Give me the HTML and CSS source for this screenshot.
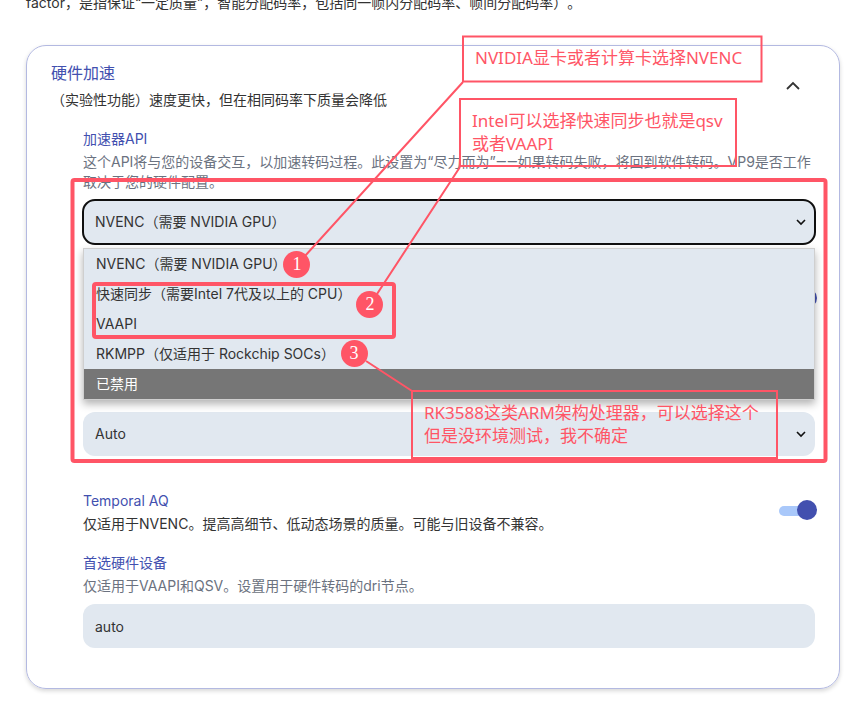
FILE: index.html
```html
<!DOCTYPE html>
<html lang="zh-CN">
<head>
<meta charset="utf-8">
<title>硬件加速</title>
<link rel="stylesheet" href="styles.css">
</head>
<body>
<main class="page">
  <p class="intro">factor，是指保证“一定质量”，智能分配码率，包括同一帧内分配码率、帧间分配码率）。</p>

  <section class="card">
    <header class="card-header">
      <div class="card-heading">
        <h2 class="card-title">硬件加速</h2>
        <p class="card-subtitle">（实验性功能）速度更快，但在相同码率下质量会降低</p>
      </div>
      <button class="collapse" type="button" aria-label="收起">
        <svg width="14" height="10" viewBox="0 0 14 10"><path d="M1 8 L7 2 L13 8" fill="none" stroke="#333" stroke-width="1.800"/></svg>
      </button>
    </header>

    <div class="settings">
      <div class="field">
        <label class="label" for="accel">加速器API</label>
        <p class="hint">这个API将与您的设备交互，以加速转码过程。此设置为“尽力而为”<span class="dash">——</span>如果转码失败，将回到软件转码。VP9是否工作取决于您的硬件配置。</p>
        <div class="control">
          <select class="box focused" id="accel">
            <option>NVENC（需要 NVIDIA GPU）</option>
          </select>
          <svg class="arrow" width="10" height="8" viewBox="0 0 10 8"><path d="M1 2 L5 6 L9 2" fill="none" stroke="#111" stroke-width="1.600"/></svg>
          <ul class="menu" role="listbox" aria-label="加速器API">
            <li role="option">NVENC（需要 NVIDIA GPU）</li>
            <li role="option">快速同步（需要Intel 7代及以上的 CPU）</li>
            <li role="option">VAAPI</li>
            <li role="option">RKMPP（仅适用于 Rockchip SOCs）</li>
            <li role="option" class="active">已禁用</li>
          </ul>
        </div>
      </div>

      <div class="row">
        <div class="row-text"></div>
        <input class="switch" type="checkbox" checked aria-label="开关">
      </div>

      <div class="field covered">
        <div class="control">
          <select class="box" id="mode" aria-label="模式">
            <option>Auto</option>
          </select>
          <svg class="arrow" width="10" height="8" viewBox="0 0 10 8"><path d="M1 2 L5 6 L9 2" fill="none" stroke="#111" stroke-width="1.600"/></svg>
        </div>
      </div>

      <div class="row">
        <div class="row-text">
          <label class="label" for="taq">Temporal AQ</label>
          <p class="hint dark">仅适用于NVENC。提高高细节、低动态场景的质量。可能与旧设备不兼容。</p>
        </div>
        <input class="switch" id="taq" type="checkbox" checked>
      </div>

      <div class="field">
        <label class="label" for="device">首选硬件设备</label>
        <p class="hint">仅适用于VAAPI和QSV。设置用于硬件转码的dri节点。</p>
        <input class="box" id="device" type="text" value="auto">
      </div>
    </div>
  </section>

  <div class="notes">
    <svg class="note-lines" width="851" height="725" viewBox="0 0 851 725" fill="none" stroke="#ff5566">
      <rect x="72.500" y="180" width="753" height="281" rx="2" stroke-width="4"/>
      <rect x="94" y="284" width="300" height="53" rx="2" stroke-width="4"/>
      <g stroke-width="2">
        <rect x="463" y="36.500" width="298.500" height="45"/>
        <rect x="460" y="99" width="276" height="67"/>
        <rect x="412" y="391" width="365" height="67"/>
        <path d="M463 82 L305 256 M460 167 L377 294 M412 391 L366 361"/>
      </g>
      <g fill="#ff5566" stroke="none">
        <circle cx="296.500" cy="264.500" r="13.500"/>
        <circle cx="369.500" cy="304.500" r="13.500"/>
        <circle cx="354.500" cy="353.500" r="13.500"/>
      </g>
      <g class="note-number" fill="#fff" stroke="none" text-anchor="middle">
        <text x="297" y="270">1</text>
        <text x="370" y="310">2</text>
        <text x="354" y="359">3</text>
      </g>
    </svg>
    <p class="note note-one">NVIDIA显卡或者计算卡选择NVENC</p>
    <p class="note note-two">Intel可以选择快速同步也就是qsv<br>或者VAAPI</p>
    <p class="note note-three">RK3588这类ARM架构处理器，可以选择这个<br>但是没环境测试，我不确定</p>
  </div>
</main>
</body>
</html>
```
FILE: styles.css
```css
* {
  box-sizing: border-box;
}

body,
h2,
p,
ul {
  margin: 0;
  padding: 0;
}

body {
  background: #fff;
  color: #333;
  font-family: Inter, "Noto Sans CJK SC", sans-serif;
  font-size: 14px;
  line-height: 20px;
  text-spacing-trim: space-all;
}

.page {
  position: relative;
  display: flow-root;
  padding: 0 11px 36px 26px;
}

.intro {
  margin-top: -7px;
}

.card {
  margin-top: 32px;
  padding: 15px 24px 40px;
  border: 1px solid #b3b9e1;
  border-radius: 20px;
  box-shadow: 0 2px 4px rgba(0, 0, 0, 0.16);
}

.card-header {
  display: flex;
  align-items: center;
  justify-content: space-between;
}

.card-title {
  color: #4250af;
  font-size: 16px;
  font-weight: 400;
  line-height: 24px;
}

.card-subtitle {
  margin-top: 5px;
}

.collapse {
  display: flex;
  padding: 0;
  margin-right: 15px;
  border: 0;
  background: none;
}

.settings {
  margin: 19px 0 0 32px;
}

.label {
  display: block;
  color: #4250af;
}

.hint {
  margin-top: 3px;
  color: #6b7280;
}

.hint.dark {
  color: #333;
}

.dash {
  font-family: Roboto, sans-serif;
}

.control {
  position: relative;
  margin: 8px 0 35px;
}

.box {
  display: block;
  width: 100%;
  height: 44px;
  padding: 0 12px;
  border: 0;
  border-radius: 12px;
  background: #e1e8f0;
  color: #333;
  font: inherit;
  appearance: none;
}

.hint + .box {
  margin-top: 8px;
}

.focused {
  outline: 2px solid #101010;
  outline-offset: -1px;
}

.arrow {
  position: absolute;
  right: 9px;
  top: 18px;
}

.menu {
  position: absolute;
  z-index: 1;
  top: 48px;
  left: 0;
  right: 0;
  border: 1px solid #cfcfcf;
  background: #e1e8f0;
  box-shadow: 0 4px 8px rgba(0, 0, 0, 0.3);
  list-style: none;
}

.menu li {
  padding: 0 12px;
  line-height: 30px;
}

.menu .active {
  background: #767676;
  color: #fff;
}

.row {
  display: flex;
  align-items: center;
  justify-content: space-between;
  min-height: 43px;
  margin-bottom: 19px;
}

.switch {
  position: relative;
  width: 38px;
  height: 20px;
  margin: 0 -2px 6px 0;
  appearance: none;
}

.switch::before,
.switch::after {
  content: "";
  position: absolute;
}

.switch::before {
  inset: 6px 8px 4px 0;
  border-radius: 5px;
  background: #a9c8fa;
}

.switch::after {
  top: 0;
  right: 0;
  width: 20px;
  height: 20px;
  border-radius: 50%;
  background: #4250af;
}

.covered {
  padding-top: 63px;
}

.notes {
  position: absolute;
  inset: 0;
  z-index: 2;
  pointer-events: none;
}

.note-lines {
  display: block;
}

.note-number {
  font: 18px "Liberation Serif", serif;
}

.note {
  position: absolute;
  color: #ff5566;
  font-family: "Noto Sans", "Noto Sans CJK SC", sans-serif;
  font-size: 17px;
  line-height: 23px;
  white-space: nowrap;
}

.note-one {
  left: 475px;
  top: 46px;
}

.note-two {
  left: 472px;
  top: 109px;
}

.note-three {
  left: 424px;
  top: 401px;
}
```
